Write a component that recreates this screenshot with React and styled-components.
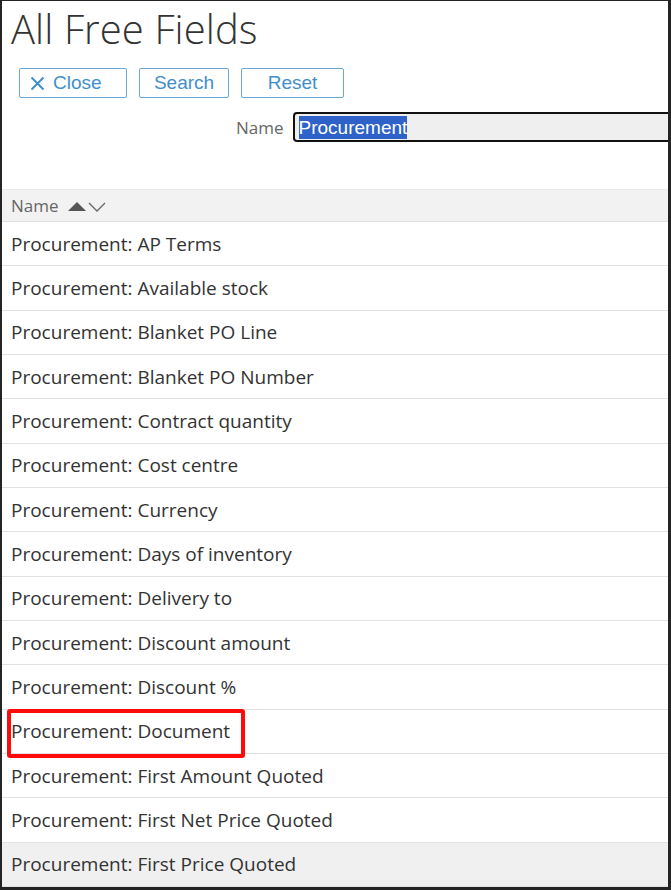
import React from 'react';
import styled, { createGlobalStyle } from 'styled-components';

const GlobalStyle = createGlobalStyle`
  html, body {
    margin: 0;
    padding: 0;
    background: #ffffff;
  }
  * {
    box-sizing: border-box;
  }
`;

const Frame = styled.div`
  width: 671px;
  height: 890px;
  overflow: hidden;
  background: #ffffff;
  border-style: solid;
  border-color: #242424;
  border-width: 1px 3px 3px 2px;
  display: flex;
  flex-direction: column;
  font-family: 'Open Sans', 'Liberation Sans', sans-serif;
`;

const Title = styled.h1`
  margin: 0;
  padding: 3px 0 0 9px;
  height: 56px;
  font-size: 40px;
  font-weight: 300;
  line-height: 50px;
  color: #333333;
  letter-spacing: 0.1px;
  white-space: nowrap;
`;

const Toolbar = styled.div`
  display: flex;
  gap: 12px;
  padding-left: 17px;
  margin-top: 11px;
`;

const Button = styled.button`
  display: flex;
  align-items: center;
  justify-content: ${({ $icon }) => ($icon ? 'flex-start' : 'center')};
  gap: 8px;
  width: ${({ $width }) => $width}px;
  height: 30px;
  padding: ${({ $icon }) => ($icon ? '0 0 0 10px' : '0')};
  background: #ffffff;
  border: 1px solid #68a8d8;
  border-radius: 2px;
  color: #3f8fcd;
  font-family: 'Liberation Sans', Arial, sans-serif;
  font-size: 19px;
  cursor: pointer;
`;

const SearchRow = styled.div`
  display: flex;
  align-items: center;
  gap: 9px;
  padding-left: 234px;
  margin-top: 14px;
`;

const Label = styled.span`
  font-size: 17px;
  color: #666666;
`;

const InputBox = styled.div`
  flex: none;
  width: 420px;
  height: 30px;
  display: flex;
  align-items: center;
  padding-left: 4px;
  background: #efefef;
  border: 2px solid #111111;
  border-radius: 4px;
`;

const Selected = styled.span`
  background: #2e62c8;
  color: #ffffff;
  font-family: 'Liberation Sans', Arial, sans-serif;
  font-size: 19px;
  line-height: 23px;
`;

const Table = styled.div`
  margin-top: 47px;
  display: flex;
  flex-direction: column;
`;

const HeaderRow = styled.div`
  height: 33px;
  display: flex;
  align-items: center;
  gap: 8px;
  padding-left: 9px;
  background: #f2f2f2;
  border-top: 1px solid #ebebeb;
  border-bottom: 1px solid #e0e0e0;
`;

const HeaderLabel = styled.span`
  font-size: 17px;
  color: #666666;
`;

const Row = styled.div`
  position: relative;
  height: 44.33px;
  flex: none;
  display: flex;
  align-items: center;
  padding-left: 9px;
  background: ${({ $hovered }) => ($hovered ? '#f0f0f0' : '#ffffff')};
  border-bottom: 1px solid #e2e2e2;
  font-size: 19px;
  color: #333333;
  white-space: nowrap;
`;

const Marker = styled.span`
  position: absolute;
  z-index: 2;
  left: 5px;
  top: -1px;
  width: 238px;
  height: 49px;
  border: 4px solid #ff0a0a;
  border-radius: 3px;
  pointer-events: none;
`;

const CloseIcon = () => (
  <svg width="15" height="15" viewBox="0 0 15 15" fill="none">
    <path d="M1.5 1.5 L13.5 13.5 M13.5 1.5 L1.5 13.5" stroke="#3f8fcd" strokeWidth="2" />
  </svg>
);

const SortIcon = () => (
  <svg width="40" height="12" viewBox="0 0 40 12" fill="none">
    <path d="M1 11 L10 2 L19 11 Z" fill="#555555" />
    <path d="M22 3 L30 11 L38 3" stroke="#666666" strokeWidth="1.3" />
  </svg>
);

const fields = [
  'AP Terms',
  'Available stock',
  'Blanket PO Line',
  'Blanket PO Number',
  'Contract quantity',
  'Cost centre',
  'Currency',
  'Days of inventory',
  'Delivery to',
  'Discount amount',
  'Discount %',
  'Document',
  'First Amount Quoted',
  'First Net Price Quoted',
  'First Price Quoted'
];

const App = () => {
  return (
    <>
      <GlobalStyle />
      <Frame>
        <Title>All Free Fields</Title>
        <Toolbar>
          <Button $width={108} $icon>
            <CloseIcon />
            Close
          </Button>
          <Button $width={90}>Search</Button>
          <Button $width={103}>Reset</Button>
        </Toolbar>
        <SearchRow>
          <Label>Name</Label>
          <InputBox>
            <Selected>Procurement</Selected>
          </InputBox>
        </SearchRow>
        <Table>
          <HeaderRow>
            <HeaderLabel>Name</HeaderLabel>
            <SortIcon />
          </HeaderRow>
          {fields.map((field, index) => (
            <Row key={field} $hovered={index === fields.length - 1}>
              {field === 'Document' && <Marker />}
              Procurement: {field}
            </Row>
          ))}
        </Table>
      </Frame>
    </>
  );
};

export default App;
